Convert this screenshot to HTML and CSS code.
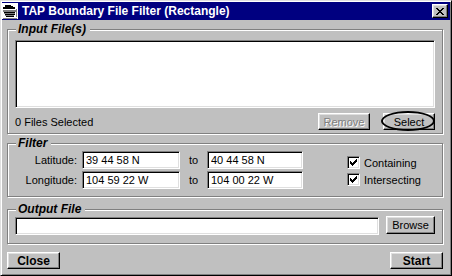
FILE: index.html
```html
<!DOCTYPE html>
<html lang="en">

<head>
  <meta charset="UTF-8" />
  <title>TAP Boundary File Filter (Rectangle)</title>
  <link rel="stylesheet" href="styles.css">
</head>

<body>
  <div class="window">
    <div class="titlebar">
      <svg class="app-icon" width="16" height="16" viewBox="0 0 16 16" shape-rendering="crispEdges">
        <rect x="0" y="0" width="16" height="16" fill="#fff" />
        <path d="M3 2h6v1h2v1h2v2H1V4h2z" fill="#000" />
        <path d="M1 7h13v2H1z" fill="#808080" />
        <path d="M2 9h11v1H2zM3 11h10v1H3zM4 13h8v1H4z" fill="#000" />
        <path d="M2 10h11v1H2zM3 12h9v1H3z" fill="#808080" />
        <path d="M14 6h1v8h-1zM1 15h14v1H1z" fill="#808080" />
      </svg>
      <span class="title">TAP Boundary File Filter (Rectangle)</span>
      <button class="btn title-close">
        <svg width="8" height="7" viewBox="0 0 8 7" shape-rendering="crispEdges">
          <path d="M0 0h2v1H0zM6 0h2v1H6zM1 1h2v1H1zM5 1h2v1H5zM2 2h4v1H2zM3 3h2v1H3zM2 4h4v1H2zM1 5h2v1H1zM5 5h2v1H5zM0 6h2v1H0zM6 6h2v1H6z" fill="#000" />
        </svg>
      </button>
    </div>

    <div class="content">
      <fieldset class="group group-input">
        <legend>Input File(s)</legend>
        <div class="listbox"></div>
        <div class="file-row">
          <span class="count">0 Files Selected</span>
          <button class="btn btn-disabled">Remove</button>
          <span class="select-wrap">
            <button class="btn">Select</button>
            <span class="ring"></span>
          </span>
        </div>
      </fieldset>

      <fieldset class="group group-filter">
        <legend>Filter</legend>
        <div class="filter-body">
          <div class="coords">
            <label for="latFrom">Latitude:</label>
            <input class="field" id="latFrom" value="39 44 58 N" />
            <span class="to">to</span>
            <input class="field" value="40 44 58 N" />
            <label for="lonFrom">Longitude:</label>
            <input class="field" id="lonFrom" value="104 59 22 W" />
            <span class="to">to</span>
            <input class="field" value="104 00 22 W" />
          </div>
          <div class="checks">
            <div class="check-row">
              <span class="checkbox">
                <svg width="7" height="7" viewBox="0 0 7 7" shape-rendering="crispEdges">
                  <path d="M6 0h1v1H6zM5 1h2v1H5zM0 2h1v1H0zM4 2h3v1H4zM0 3h2v1H0zM3 3h3v1H3zM0 4h5v1H0zM1 5h3v1H1zM2 6h1v1H2z" fill="#000" />
                </svg>
              </span>
              Containing
            </div>
            <div class="check-row">
              <span class="checkbox">
                <svg width="7" height="7" viewBox="0 0 7 7" shape-rendering="crispEdges">
                  <path d="M6 0h1v1H6zM5 1h2v1H5zM0 2h1v1H0zM4 2h3v1H4zM0 3h2v1H0zM3 3h3v1H3zM0 4h5v1H0zM1 5h3v1H1zM2 6h1v1H2z" fill="#000" />
                </svg>
              </span>
              Intersecting
            </div>
          </div>
        </div>
      </fieldset>

      <fieldset class="group group-output">
        <legend>Output File</legend>
        <div class="output-row">
          <input class="field output-field" value="" />
          <button class="btn browse">Browse</button>
        </div>
      </fieldset>

      <div class="footer">
        <button class="btn btn-bold">Close</button>
        <button class="btn btn-bold">Start</button>
      </div>
    </div>
  </div>
</body>

</html>
```

FILE: styles.css
```css
* {
  box-sizing: border-box;
}

body {
  margin: 0;
  font-family: "Liberation Sans", Arial, sans-serif;
  font-size: 11px;
  color: #000;
  background: #c0c0c0;
}

.window {
  width: 452px;
  height: 276px;
  padding: 1px;
  background: #c0c0c0;
  border: 1px solid;
  border-color: #dfdfdf #000 #000 #dfdfdf;
  box-shadow: inset 1px 1px #fff, inset -1px -1px #808080;
  display: flex;
  flex-direction: column;
}

.titlebar {
  height: 18px;
  background: #000080;
  color: #fff;
  display: flex;
  align-items: center;
  padding-right: 2px;
}

.app-icon {
  display: block;
}

.title {
  margin-left: 4px;
  font-weight: bold;
  font-size: 12px;
}

.btn {
  font-family: inherit;
  font-size: 11px;
  color: #000;
  background: #c0c0c0;
  height: 17px;
  padding: 0;
  border: 1px solid;
  border-color: #fff #000 #000 #fff;
  box-shadow: inset -1px -1px #808080, inset 1px 1px #dfdfdf;
  border-radius: 0;
}

.title-close {
  margin-left: auto;
  width: 16px;
  height: 14px;
  display: flex;
  align-items: center;
  justify-content: center;
}

.btn-disabled {
  color: #808080;
  text-shadow: 1px 1px 0 #fff;
}

.btn-bold {
  width: 53px;
  font-size: 12px;
  font-weight: bold;
}

.content {
  flex: 1;
  padding: 2px 7px 0 5px;
  display: flex;
  flex-direction: column;
}

.group {
  margin: 0;
  min-width: 0;
  padding: 0 7px 3px;
  border: 1px solid #808080;
  box-shadow: inset 1px 1px #fff, 1px 1px #fff;
}

.group legend {
  margin-left: 1px;
  padding: 0 4px 0 2px;
  background: #c0c0c0;
  font-size: 12px;
  font-weight: bold;
  font-style: italic;
  line-height: 14px;
}

.field,
.listbox,
.checkbox {
  background: #fff;
  border: 1px solid;
  border-color: #808080 #fff #fff #808080;
  box-shadow: inset 1px 1px #000, inset -1px -1px #dfdfdf;
}

.listbox {
  height: 68px;
  margin-top: 4px;
}

.file-row {
  display: flex;
  align-items: center;
  margin-top: 5px;
}

.count {
  flex: 1;
}

.file-row .btn {
  width: 52px;
}

.select-wrap {
  position: relative;
  margin-left: 13px;
  display: flex;
}

.ring {
  position: absolute;
  left: -2px;
  top: -2px;
  width: 54px;
  height: 20px;
  border: 2px solid #000;
  border-radius: 50%;
}

.group-filter {
  margin-top: 2px;
  padding-bottom: 7px;
}

.filter-body {
  display: flex;
  padding-top: 1px;
}

.coords {
  display: grid;
  grid-template-columns: 67px 98px 27px 96px;
  grid-auto-rows: 18px;
  row-gap: 2px;
  align-items: center;
}

.coords label {
  text-align: right;
  padding-right: 5px;
}

.to {
  text-align: center;
}

.field {
  height: 18px;
  width: 100%;
  padding: 0 3px;
  font-family: inherit;
  font-size: 11px;
  color: #000;
  outline: none;
  border-radius: 0;
}

.checks {
  margin-left: 44px;
  padding-top: 3px;
}

.check-row {
  height: 17px;
  display: flex;
  align-items: center;
  gap: 4px;
}

.checkbox {
  width: 13px;
  height: 13px;
  display: flex;
  align-items: center;
  justify-content: center;
}

.group-output {
  margin-top: 5px;
  padding-bottom: 8px;
}

.output-row {
  display: flex;
  align-items: flex-start;
}

.output-field {
  flex: 1;
  margin-top: 1px;
}

.browse {
  width: 49px;
  height: 18px;
  margin-left: 7px;
}

.footer {
  display: flex;
  justify-content: space-between;
  margin-top: 8px;
}
```
